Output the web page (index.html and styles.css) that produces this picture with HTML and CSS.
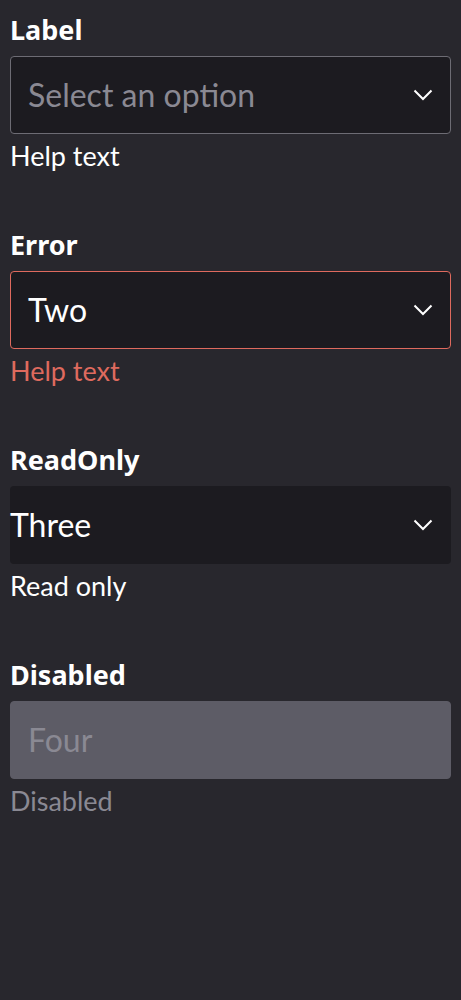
FILE: index.html
```html
<!DOCTYPE html>
<html>
<head>
<meta charset="utf-8">
<link rel="stylesheet" href="styles.css">
</head>
<body>
<div class="page">
  <div class="field">
    <div class="label">Label</div>
    <div class="select">
      <span class="value placeholder">Select an option</span>
      <svg class="chev" width="20" height="12" viewBox="0 0 20 12"><polyline points="1.5,1.5 10,10 18.5,1.5" fill="none" stroke="#fff" stroke-width="2"/></svg>
    </div>
    <div class="help">Help text</div>
  </div>
  <div class="field">
    <div class="label">Error</div>
    <div class="select error">
      <span class="value">Two</span>
      <svg class="chev" width="20" height="12" viewBox="0 0 20 12"><polyline points="1.5,1.5 10,10 18.5,1.5" fill="none" stroke="#fff" stroke-width="2"/></svg>
    </div>
    <div class="help help-error">Help text</div>
  </div>
  <div class="field">
    <div class="label">ReadOnly</div>
    <div class="select readonly">
      <span class="value">Three</span>
      <svg class="chev" width="20" height="12" viewBox="0 0 20 12"><polyline points="1.5,1.5 10,10 18.5,1.5" fill="none" stroke="#fff" stroke-width="2"/></svg>
    </div>
    <div class="help">Read only</div>
  </div>
  <div class="field">
    <div class="label">Disabled</div>
    <div class="select disabled">
      <span class="value">Four</span>
    </div>
    <div class="help help-disabled">Disabled</div>
  </div>
</div>
</body>
</html>
```

FILE: styles.css
```css
html, body {
  margin: 0;
  padding: 0;
  background: #28272d;
}
body {
  font-family: "Lato", "Noto Sans", sans-serif;
  color: #ffffff;
}
.page {
  padding: 12px 10px 0 10px;
  display: flex;
  flex-direction: column;
  gap: 54px;
}
.field {
  display: flex;
  flex-direction: column;
}
.label {
  font-family: "Noto Sans", sans-serif;
  font-weight: 700;
  font-size: 27px;
  line-height: 36px;
  margin-bottom: 8px;
}
.select {
  box-sizing: border-box;
  height: 78px;
  display: flex;
  align-items: center;
  justify-content: space-between;
  background: #1c1b20;
  border: 1px solid #6d6c74;
  border-radius: 4px;
  padding: 0 17px 0 17px;
}
.value {
  font-size: 32px;
  line-height: 40px;
  color: #ffffff;
}
.placeholder {
  color: #8a8993;
}
.chev {
  display: block;
  flex-shrink: 0;
}
.error {
  border-color: #df6a5e;
}
.readonly {
  border: none;
  padding-left: 0;
  padding-right: 18px;
}
.disabled {
  background: #5d5c66;
  border-color: #5d5c66;
}
.disabled .value {
  color: #8a8993;
}
.help {
  font-size: 27px;
  line-height: 34px;
  margin-top: 5px;
  color: #ffffff;
}
.help-error {
  color: #df6a5e;
}
.help-disabled {
  color: #8a8993;
}
```
